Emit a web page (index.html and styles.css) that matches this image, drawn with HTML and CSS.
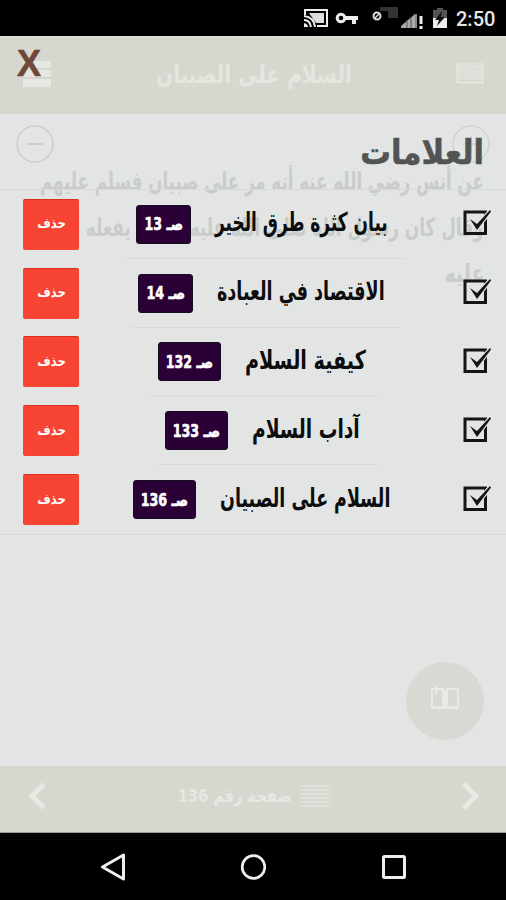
FILE: index.html
```
<!DOCTYPE html>
<html lang="ar">
<head>
<meta charset="utf-8">
<title>العلامات</title>
<link rel="stylesheet" href="styles.css">
</head>
<body>
<svg class="defs" width="0" height="0">
  <symbol id="check" viewBox="0 0 28 26"><path d="M2 3H22.500V24.500H2Z" fill="none" stroke="#151515" stroke-width="3"/><path d="M7 10L14 15L27 1L28 2.500L14 21Z" fill="#151515" stroke="#e2e5e3" stroke-width="2.400" paint-order="stroke"/></symbol>
</svg>
<div class="phone">
  <div class="status">
    <svg class="status-icons" width="216" height="36" viewBox="0 0 216 36">
      <path d="M15 15V10H37V26H27" fill="none" stroke="#eee" stroke-width="2"/><path d="M19 13H34V23H26" fill="#ddd"/>
      <g fill="none" stroke="#eee" stroke-width="2"><path d="M14 16Q24 17 25 27M14 20Q20 20 21 27"/></g><path d="M14 23Q18 24 18 27H14Z" fill="#eee"/>
      <circle cx="51" cy="18" r="3.800" fill="none" stroke="#eee" stroke-width="3"/><path d="M54 16H68V20H66V24H62V20H54Z" fill="#eee"/>
      <path d="M90 7H108V18H98V11H90Z" fill="#333"/><circle cx="87" cy="16" r="3.500" fill="none" stroke="#ddd" stroke-width="2"/><path d="M85 18L89 14" stroke="#ddd" stroke-width="1.500"/>
      <path d="M111 28V26L125 14V28Z" fill="#aaa"/><path d="M117 20V28M121 17V28" stroke="#555" stroke-width="1"/><path d="M126 14V28" stroke="#888" stroke-width="2"/><path d="M131 16V24M131 26V29" stroke="#eee" stroke-width="3"/>
      <path d="M143 10H147V8H153V10H157V18H143Z" fill="#555"/><path d="M143 18H157V28H143Z" fill="#eee"/><path d="M152 11L145 20H149L147 26L155 17H151Z" fill="#111"/>
    </svg>
    <span class="time">2:50</span>
  </div>

  <div class="app">
    <div class="header">
      <svg width="28" height="26" viewBox="0 0 28 26"><path d="M0 0H28V7H0ZM0 9H28V16H0ZM0 18H28V26H0Z" fill="#e5e7e2"/></svg>
      <span class="t header-title">السلام على الصبيان</span>
      <svg width="28" height="22" viewBox="0 0 28 22"><path d="M1 0H27V17H1Z" fill="#dcded7"/><path d="M1.500 0V19.500H26.500V0" fill="none" stroke="#e5e7e1" stroke-width="2"/><path d="M14 1V17M4 4H11M4 8H11M4 12H11M17 4H24M17 8H24M17 12H24" fill="none" stroke="#e1e3dc" stroke-width="1.500"/></svg>
    </div>
    <div class="reader">
      <div class="zoomers">
        <svg width="38" height="38" viewBox="0 0 38 38"><path d="M11 19H27" stroke="#cbcecd" stroke-width="2"/><circle cx="19" cy="19" r="18" fill="none" stroke="#cbcecd" stroke-width="1.500"/></svg>
        <svg width="38" height="38" viewBox="0 0 38 38"><path d="M11 19H27M19 11V27" stroke="#d2d5d3" stroke-width="2"/><circle cx="19" cy="19" r="18" fill="none" stroke="#d0d3d1" stroke-width="1.500"/></svg>
      </div>
      <div class="line"><span class="t l1">عن أنس رضي الله عنه أنه مر على صبيان فسلم عليهم</span></div>
      <div class="line"><span class="t l2">وقال كان رسول الله صلى الله عليه وسلم يفعله</span></div>
      <div class="line"><span class="t l3">عليه</span></div>
      <div class="fab"><svg width="30" height="26" viewBox="0 0 30 26"><path d="M2 4V22H28V4H17V20M2 4H13V20M15 6V22M2 23H28M6 1V9" fill="none" stroke="#e8eae6" stroke-width="2"/></svg></div>
    </div>
    <div class="footer">
      <svg width="19" height="28" viewBox="0 0 19 28"><path d="M16 2L4 14L16 26" fill="none" stroke="#e7e9e3" stroke-width="5"/></svg>
      <div class="page-label">
        <span class="t page-number">صفحة رقم 136</span>
        <svg width="30" height="24" viewBox="0 0 30 24"><path d="M2 2H28M0 6H30M0 10H30M0 14H28M0 18H30M2 22H28" stroke="#e3e5df" stroke-width="1.500"/></svg>
      </div>
      <svg width="19" height="28" viewBox="0 0 19 28"><path d="M3 2L15 14L3 26" fill="none" stroke="#e7e9e3" stroke-width="5"/></svg>
    </div>
  </div>

  <div class="overlay">
    <div class="close">X</div>
    <div class="heading"><span class="t heading-text">العلامات</span></div>
    <div class="list">
      <div class="row r1"><div class="delete"><span class="t">حذف</span></div><div class="badge"><span class="t">صـ 13</span></div><div class="name"><span class="t">بيان كثرة طرق الخير</span></div><svg class="check"><use href="#check"/></svg></div>
      <div class="row r2"><div class="delete"><span class="t">حذف</span></div><div class="badge"><span class="t">صـ 14</span></div><div class="name"><span class="t">الاقتصاد في العبادة</span></div><svg class="check"><use href="#check"/></svg></div>
      <div class="row r3"><div class="delete"><span class="t">حذف</span></div><div class="badge wide"><span class="t">صـ 132</span></div><div class="name"><span class="t">كيفية السلام</span></div><svg class="check"><use href="#check"/></svg></div>
      <div class="row r4"><div class="delete"><span class="t">حذف</span></div><div class="badge wide"><span class="t">صـ 133</span></div><div class="name"><span class="t">آداب السلام</span></div><svg class="check"><use href="#check"/></svg></div>
      <div class="row r5"><div class="delete"><span class="t">حذف</span></div><div class="badge wide"><span class="t">صـ 136</span></div><div class="name"><span class="t">السلام على الصبيان</span></div><svg class="check"><use href="#check"/></svg></div>
    </div>
  </div>

  <div class="nav">
    <svg width="26" height="28" viewBox="0 0 26 28"><path d="M24.500 2V26L3.500 14Z" fill="none" stroke="#eee" stroke-width="3" stroke-linejoin="round"/></svg>
    <svg width="26" height="28" viewBox="0 0 26 28"><circle cx="13.500" cy="14" r="11.300" fill="none" stroke="#eee" stroke-width="2.700"/></svg>
    <svg width="26" height="28" viewBox="0 0 26 28"><rect x="2.500" y="3.500" width="21" height="21" rx="1" fill="none" stroke="#eee" stroke-width="3"/></svg>
  </div>
</div>
</body>
</html>
```
FILE: styles.css
```
* { box-sizing: border-box; }
body { margin: 0; background: #000; font-family: "DejaVu Sans Condensed", "DejaVu Sans", sans-serif; font-weight: 700; }
svg { display: block; flex: none; }
.defs { position: absolute; }
.phone { position: relative; width: 506px; height: 900px; overflow: hidden; display: flex; flex-direction: column; }
.t { display: inline-block; flex: none; direction: rtl; white-space: nowrap; line-height: 1; }
.status { height: 36px; background: #000; display: flex; padding-left: 290px; }
.status-icons { margin-right: -50px; }
.time { font: 500 20px/39px Roboto, sans-serif; color: #e6e6e6; }
.app { height: 797px; border-top: 2px solid #dcdeda; display: flex; flex-direction: column; }
.header { height: 76px; background: #d6d7cf; display: flex; align-items: center; justify-content: space-between; padding: 0 22px 4px 23px; }
.header-title { font-size: 25px; color: #e4e6e0; transform: scaleX(.89); }
.reader { flex: 1; background: #e2e5e3; padding: 11px 16px; display: flex; flex-direction: column; position: relative; }
.zoomers { display: flex; justify-content: space-between; height: 33px; }
.line { height: 46px; display: flex; justify-content: flex-end; align-items: center; padding-right: 6px; }
.line .t { font-size: 25px; color: #c9cccb; transform-origin: right center; }
.line .l1 { transform: scaleX(.74); }
.line .l2 { transform: scaleX(.75); }
.line .l3 { transform: scaleX(.84); }
.fab { position: absolute; right: 22px; bottom: 26px; width: 78px; height: 78px; border-radius: 50%; background: #d7d9d2; display: flex; align-items: center; justify-content: center; padding-bottom: 6px; }
.footer { height: 67px; background: #d6d7cf; border-bottom: 1px solid #9a9b96; display: flex; align-items: center; justify-content: space-between; padding: 0 26px 6px 28px; }
.page-label { display: flex; align-items: center; gap: 8px; width: 152px; justify-content: flex-end; }
.page-number { font-size: 18px; color: #e6e8e3; transform: scaleX(.9); transform-origin: right center; }
.nav { flex: 1; background: #000; display: flex; align-items: center; justify-content: center; gap: 115px; }
.overlay { position: absolute; left: 0; top: 36px; width: 506px; height: 500px; }
.close { height: 93px; padding: 9px 0 0 17px; font: 700 36px/37px "Liberation Sans", sans-serif; color: #704838; -webkit-text-stroke: .6px #704838; }
.heading { height: 61px; border-bottom: 1px solid #d7dad8; display: flex; justify-content: flex-end; padding: 6px 22px 0 0; }
.heading-text { font-size: 34px; color: #515453; -webkit-text-stroke: .5px #515453; }
.list { border-bottom: 1px solid #d8dbd9; height: 345px; }
.row { height: 68.8px; display: flex; align-items: center; padding: 0 15px 0 23px; position: relative; }
.row:not(:last-child)::after { content: ""; position: absolute; left: var(--line-start); right: var(--line-end); bottom: 0; height: 1px; background: #d8dbd9; }
.delete { flex: none; width: 56px; height: 51px; background: #f84432; border-top: 1px solid #dc2f20; border-radius: 2px; display: flex; align-items: center; justify-content: center; padding-bottom: 3px; }
.delete .t { font-size: 14px; color: #fff; transform: scaleX(.92); }
.badge { flex: none; width: 55px; height: 39px; background: #2b0037; border: 1px solid #160d20; border-radius: 3px; display: flex; align-items: center; justify-content: center; margin-left: var(--gap); }
.badge.wide { width: 63px; }
.badge .t { font-size: 18px; color: #fff; transform: scaleX(.78); -webkit-text-stroke: .6px #fff; }
.name { flex: 1; min-width: 0; padding: 0 0 4px 24px; }
.name .t { font-size: 26px; color: #0c0d0e; transform: scaleX(var(--fit)); transform-origin: left center; }
.check { width: 28px; height: 26px; margin-bottom: 4px; }
.r1 { --gap: 57px; --fit: .725; --line-start: 127px; --line-end: 101px; }
.r2 { --gap: 59px; --fit: .75; --line-start: 132px; --line-end: 106px; }
.r3 { --gap: 79px; --fit: .82; --line-start: 148px; --line-end: 126px; }
.r4 { --gap: 86px; --fit: .797; --line-start: 157px; --line-end: 128px; }
.r5 { --gap: 54px; --fit: .745; }
```
